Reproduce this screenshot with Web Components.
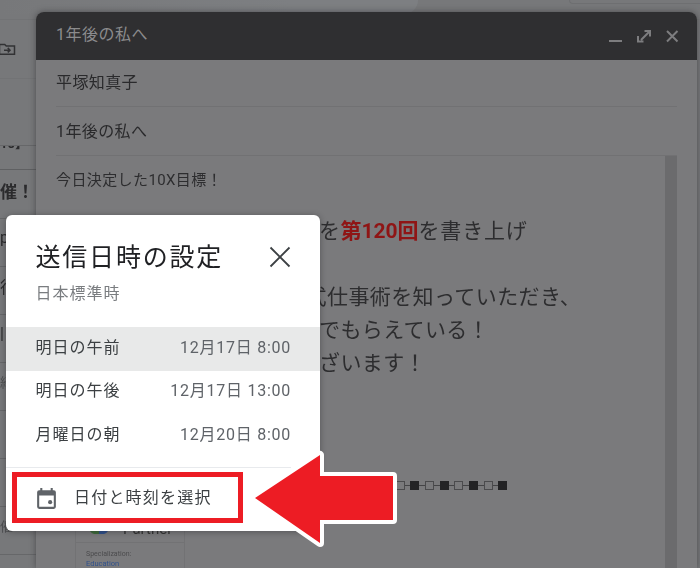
<!DOCTYPE html>
<html lang="ja">
<head>
<meta charset="utf-8">
<title>送信日時の設定</title>
<style>
  html, body { margin: 0; height: 100%; }
  body {
    width: 700px;
    height: 568px;
    overflow: hidden;
    position: relative;
    background: #77787a;
    font-family: Roboto, "Noto Sans CJK JP", sans-serif;
  }
</style>
</head>
<body>
  <mail-list></mail-list>
  <compose-window title-text="1年後の私へ" to="平塚知真子" subject="1年後の私へ"></compose-window>
  <schedule-dialog>
    <schedule-row label="明日の午前" date="12月17日 8:00" active></schedule-row>
    <schedule-row label="明日の午後" date="12月17日 13:00"></schedule-row>
    <schedule-row label="月曜日の朝" date="12月20日 8:00"></schedule-row>
  </schedule-dialog>
  <callout-arrow></callout-arrow>

<script>
class MailList extends HTMLElement {
  constructor(){
    super()
    this.shadowDOM = this.attachShadow({mode: 'open'})
  }

  connectedCallback(){
    this.shadowDOM.innerHTML = `
      <style>
        :host {
          display: block;
          position: absolute;
          inset: 0;
          overflow: hidden;
          filter: blur(.5px);
        }
        .top {
          height: 19px;
          border-bottom: 1px solid #727375;
          display: flex;
          justify-content: space-between;
          align-items: flex-start;
        }
        .search {
          width: 418px;
          height: 14px;
          background: linear-gradient(90deg, #77787a, #7d7f82 70%);
          border-bottom-right-radius: 14px;
        }
        .pill {
          width: 130px;
          height: 3px;
          border: 1px solid #6e6f71;
          border-top: 0;
          border-right: 0;
          border-bottom-left-radius: 6px;
        }
        .tool {
          height: 58px;
          display: flex;
          align-items: center;
          border-bottom: 1px solid #727375;
          width: 36px;
        }
        .tool svg { margin-left: -2px; }
        .list { width: 36px; overflow: hidden; padding-top: 66px; }
        .row {
          height: 37px;
          padding-bottom: 10px;
          border-bottom: 1px solid #666769;
          display: flex;
          align-items: center;
          white-space: nowrap;
          font-size: 16px;
          color: #2b2b2d;
        }
        .cut {
          height: 23px;
          padding-bottom: 0;
          border-top: 1px solid #666769;
          border-bottom-color: #5f6062;
          overflow: hidden;
          align-items: flex-start;
          font-weight: 700;
          font-size: 13px;
        }
        .cut span { margin-top: -10px; line-height: 16px; }
        .bold { font-weight: 700; font-size: 17px; height: 40px; padding-bottom: 8px; }
        .muted { color: #4f5052; font-size: 13px; }
      </style>
      <div class="top"><div class="search"></div><div class="pill"></div></div>
      <div class="tool">
        <svg width="18" height="18" viewBox="0 0 24 24" fill="none" stroke="#323234" stroke-width="2">
          <path d="M2 6h7l2 2h11v11H2z"/>
          <path d="M8 13.500h8M13 10.500l3 3-3 3"/>
        </svg>
      </div>
      <div class="list">
        <div class="row cut"><span>10】</span></div>
        <div class="row bold"><span>催！</span></div>
        <div class="row"><span>p</span></div>
        <div class="row"><span>行</span></div>
        <div class="row"><span>|</span></div>
        <div class="row muted"><span>紹</span></div>
        <div class="row"><span>・</span></div>
        <div class="row"><span>・</span></div>
        <div class="row muted"><span>催</span></div>
      </div>
    `
  }
}

class ComposeWindow extends HTMLElement {
  constructor(){
    super()
    this.shadowDOM = this.attachShadow({mode: 'open'})
  }

  connectedCallback(){
    this.shadowDOM.innerHTML = `
      <style>
        :host {
          display: flex;
          flex-direction: column;
          position: absolute;
          left: 36px;
          top: 12px;
          width: 661px;
          height: 556px;
          background: #7a7a7c;
          border-radius: 8px 8px 0 0;
          box-shadow: 0 0 6px rgba(40, 40, 42, .55);
          overflow: hidden;
          filter: blur(.4px);
        }
        header {
          height: 48px;
          flex: none;
          box-sizing: border-box;
          background: #2f2f31;
          display: flex;
          align-items: center;
          justify-content: space-between;
          padding: 0 14px 0 20px;
          color: #8b8b8d;
          font-size: 16px;
          letter-spacing: .5px;
        }
        header span { padding-bottom: 6px; }
        .actions { display: flex; gap: 7px; }
        .actions svg { display: block; }
        .field {
          height: 47px;
          flex: none;
          box-sizing: border-box;
          padding-bottom: 4px;
          margin: 0 20px;
          border-bottom: 1px solid #717173;
          display: flex;
          align-items: center;
          font-size: 16px;
          color: #2a2a2c;
          letter-spacing: .4px;
        }
        .subject { height: 49px; padding-bottom: 2px; }
        .body { flex: 1; display: flex; min-height: 0; padding: 0 20px; }
        .content { flex: 1; min-width: 0; color: #2d2d2f; overflow: hidden; }
        .lead { font-size: 15px; letter-spacing: .4px; margin-top: 14px; height: 20px; line-height: 20px; }
        .scroll { width: 12px; flex: none; background: #6b6b6d; }
        .para { font-size: 21px; line-height: 33px; letter-spacing: .4px; margin-left: 263px; white-space: nowrap; }
        .p1 { margin-top: 25px; }
        .p2 { margin-top: 33px; }
        .second { margin-left: 249.600px; }
        .red { color: #8f1515; font-weight: 700; letter-spacing: 0; }
        .rest { letter-spacing: .8px; }
        .beads {
          margin: 99px 0 0 339.500px;
          display: flex;
          align-items: center;
          height: 12px;
        }
        .beads i { display: block; box-sizing: border-box; width: 9px; height: 9px; }
        .beads i.on { background: #232325; }
        .beads i.off { border: 1px solid #4b4b4d; }
        .beads b { display: block; width: 5.700px; height: 1px; background: #444446; }
        .card {
          margin: 22px 0 0 19px;
          width: 108px;
          border: 1px solid #727274;
          border-top: 0;
          border-bottom: 0;
          font-family: Roboto, sans-serif;
        }
        .logo {
          height: 30px;
          box-sizing: border-box;
          display: flex;
          align-items: flex-end;
          gap: 13px;
          padding: 0 0 5px 12px;
          font-size: 15px;
          line-height: 16px;
          color: #333;
          border-bottom: 1px solid #727274;
        }
        .logo svg { display: block; flex: none; margin-bottom: 3px; }
        .spec { font-size: 7px; color: #4b4b4d; margin: 7px 0 0 10px; }
        .edu { font-size: 7.500px; color: #30518c; margin: 1px 0 0 10px; }
      </style>
      <header>
        <span>${this.getAttribute('title-text')}</span>
        <div class="actions">
          <svg width="22" height="22" viewBox="0 0 22 22" fill="none" stroke="#7d7d7f" stroke-width="2">
            <path d="M6 16h13"/>
          </svg>
          <svg width="22" height="22" viewBox="0 0 22 22" fill="none" stroke="#7d7d7f" stroke-width="2">
            <path d="M9 15L17 7M12.500 6H18V11.500M6 11v5.500H11.500" />
          </svg>
          <svg width="22" height="22" viewBox="0 0 22 22" fill="none" stroke="#7d7d7f" stroke-width="2">
            <path d="M6 6l10.500 10.500M16.500 6L6 16.500"/>
          </svg>
        </div>
      </header>
      <div class="field">${this.getAttribute('to')}</div>
      <div class="field subject">${this.getAttribute('subject')}</div>
      <div class="body">
        <div class="content">
          <div class="lead">今日決定した10X目標！</div>
          <div class="para p1">を<span class="red">第120回</span><span class="rest">を書き上げ</span></div>
          <div class="para p2 second">式仕事術を知っていただき、</div>
          <div class="para">でもらえている！</div>
          <div class="para">ざいます！</div>
          <div class="beads">
            <i class="off"></i><b></b><i class="on"></i><b></b>
            <i class="off"></i><b></b><i class="on"></i><b></b>
            <i class="off"></i><b></b><i class="on"></i><b></b>
            <i class="off"></i><b></b><i class="on"></i>
          </div>
          <div class="card">
            <div class="logo">
              <svg width="22" height="10" viewBox="0 0 22 10">
                <path d="M0 0h11v10H6Q1 9 0 0z" fill="#3d6b3a"/>
                <path d="M11 0h11q-1 9-6 10h-5z" fill="#2e4f8c"/>
              </svg>
              <span>Partner</span>
            </div>
            <div class="spec">Specialization:</div>
            <div class="edu">Education</div>
          </div>
        </div>
        <div class="scroll"></div>
      </div>
    `
  }
}

class ScheduleRow extends HTMLElement {
  constructor(){
    super()
    this.shadowDOM = this.attachShadow({mode: 'open'})
  }

  connectedCallback(){
    this.shadowDOM.innerHTML = `
      <style>
        :host {
          display: flex;
          align-items: center;
          justify-content: space-between;
          height: 43.500px;
          box-sizing: border-box;
          padding: 0 29px 6px 29.500px;
          font-size: 16px;
          color: #3c4043;
        }
        :host([active]) { background: #e8e9e9; }
        .label { letter-spacing: 1px; }
        .date { color: #5f6368; letter-spacing: .75px; }
      </style>
      <span class="label">${this.getAttribute('label')}</span>
      <span class="date">${this.getAttribute('date')}</span>
    `
  }
}

class ScheduleDialog extends HTMLElement {
  constructor(){
    super()
    this.shadowDOM = this.attachShadow({mode: 'open'})
  }

  connectedCallback(){
    this.shadowDOM.innerHTML = `
      <style>
        :host {
          display: flex;
          flex-direction: column;
          position: absolute;
          left: 6px;
          top: 215px;
          width: 314px;
          height: 316px;
          background: #fff;
          border-radius: 6px;
          box-shadow: 0 1px 6px rgba(30, 30, 32, .4);
          filter: blur(.35px);
        }
        .head {
          display: flex;
          justify-content: space-between;
          align-items: flex-start;
          height: 112px;
          flex: none;
          box-sizing: border-box;
          padding: 24px 28px 0 29.500px;
        }
        h2 {
          margin: 0;
          font-size: 25px;
          line-height: 37px;
          font-weight: 400;
          letter-spacing: 1.800px;
          color: #202124;
        }
        p {
          margin: 8px 0 0;
          font-size: 16px;
          line-height: 20px;
          letter-spacing: 1px;
          color: #7a7d80;
        }
        .close { display: block; margin-top: 6px; }
        .list { flex: none; height: 140px; }
        .foot {
          flex: 1;
          margin-right: 29px;
          border-top: 1px solid #e8eaed;
          display: flex;
          align-items: center;
          box-sizing: border-box;
          padding: 0 0 8px 28px;
          gap: 15px;
          font-size: 16px;
          letter-spacing: 1.200px;
          color: #3c4043;
        }
        .foot svg { display: block; flex: none; margin-top: 6px; }
      </style>
      <div class="head">
        <div>
          <h2>送信日時の設定</h2>
          <p>日本標準時</p>
        </div>
        <svg class="close" width="24" height="24" viewBox="0 0 24 24" fill="none" stroke="#3c4043" stroke-width="1.800">
          <path d="M2.500 2.500l19 19M21.500 2.500l-19 19"/>
        </svg>
      </div>
      <div class="list"><slot></slot></div>
      <div class="foot">
        <svg width="25" height="25" viewBox="0 0 24 24" fill="#5f6368">
          <path d="M19 4h-1V2h-2v2H8V2H6v2H5a2 2 0 0 0-2 2v14a2 2 0 0 0 2 2h14a2 2 0 0 0 2-2V6a2 2 0 0 0-2-2zm0 16H5V9h14v11z"/>
          <circle cx="15.500" cy="15.500" r="2"/>
        </svg>
        <span>日付と時刻を選択</span>
      </div>
    `
  }
}

class CalloutArrow extends HTMLElement {
  constructor(){
    super()
    this.shadowDOM = this.attachShadow({mode: 'open'})
  }

  connectedCallback(){
    this.shadowDOM.innerHTML = `
      <style>
        :host {
          display: block;
          position: absolute;
          inset: 0;
          pointer-events: none;
        }
        svg { display: block; }
      </style>
      <svg width="700" height="568" viewBox="0 0 700 568">
        <rect x="14.500" y="474.500" width="226" height="46" fill="none" stroke="#ed1c24" stroke-width="5"/>
        <path d="M255 498L320 455V476H393V520H320V543Z" fill="#ed1c24" stroke="#fff" stroke-width="8" stroke-linejoin="round" paint-order="stroke"/>
      </svg>
    `
  }
}

customElements.define('mail-list', MailList)
customElements.define('compose-window', ComposeWindow)
customElements.define('schedule-row', ScheduleRow)
customElements.define('schedule-dialog', ScheduleDialog)
customElements.define('callout-arrow', CalloutArrow)
</script>
</body>
</html>
